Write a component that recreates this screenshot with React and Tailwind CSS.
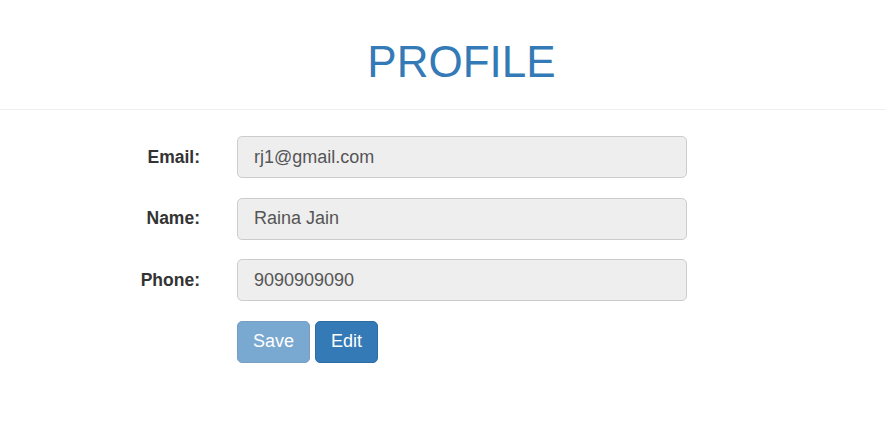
export default function App() {
  const rows = [
    { label: "Email:", value: "rj1@gmail.com" },
    { label: "Name:", value: "Raina Jain" },
    { label: "Phone:", value: "9090909090" },
  ];
  return (
    <div
      className="w-[885px] h-[428px] bg-white text-[#333]"
      style={{ fontFamily: '"Liberation Sans", Arial, sans-serif' }}
    >
      <div className="pt-[37px] pb-[22px] border-b border-[#eee] pl-[38px] text-center">
        <h1 className="text-[44px] leading-[50px] text-[#337ab7] font-normal">PROFILE</h1>
      </div>
      <div className="pt-[26px] flex flex-col gap-[19.5px]">
        {rows.map((r) => (
          <div key={r.label} className="flex items-center">
            <div className="w-[200px] text-right text-[17.5px] font-bold text-[#333]">{r.label}</div>
            <div className="ml-[37px] w-[450px] h-[42px] bg-[#eee] border border-[#ccc] rounded-[5px] px-[16px] flex items-center text-[18px] text-[#555]">
              {r.value}
            </div>
          </div>
        ))}
        <div className="flex items-center pl-[237px] gap-[5px]">
          <button className="h-[42px] px-[15px] bg-[#337ab7] border border-[#2e6da4] rounded-[5px] text-white text-[18px] opacity-65">
            Save
          </button>
          <button className="h-[42px] px-[15px] bg-[#337ab7] border border-[#2e6da4] rounded-[5px] text-white text-[18px]">
            Edit
          </button>
        </div>
      </div>
    </div>
  );
}
